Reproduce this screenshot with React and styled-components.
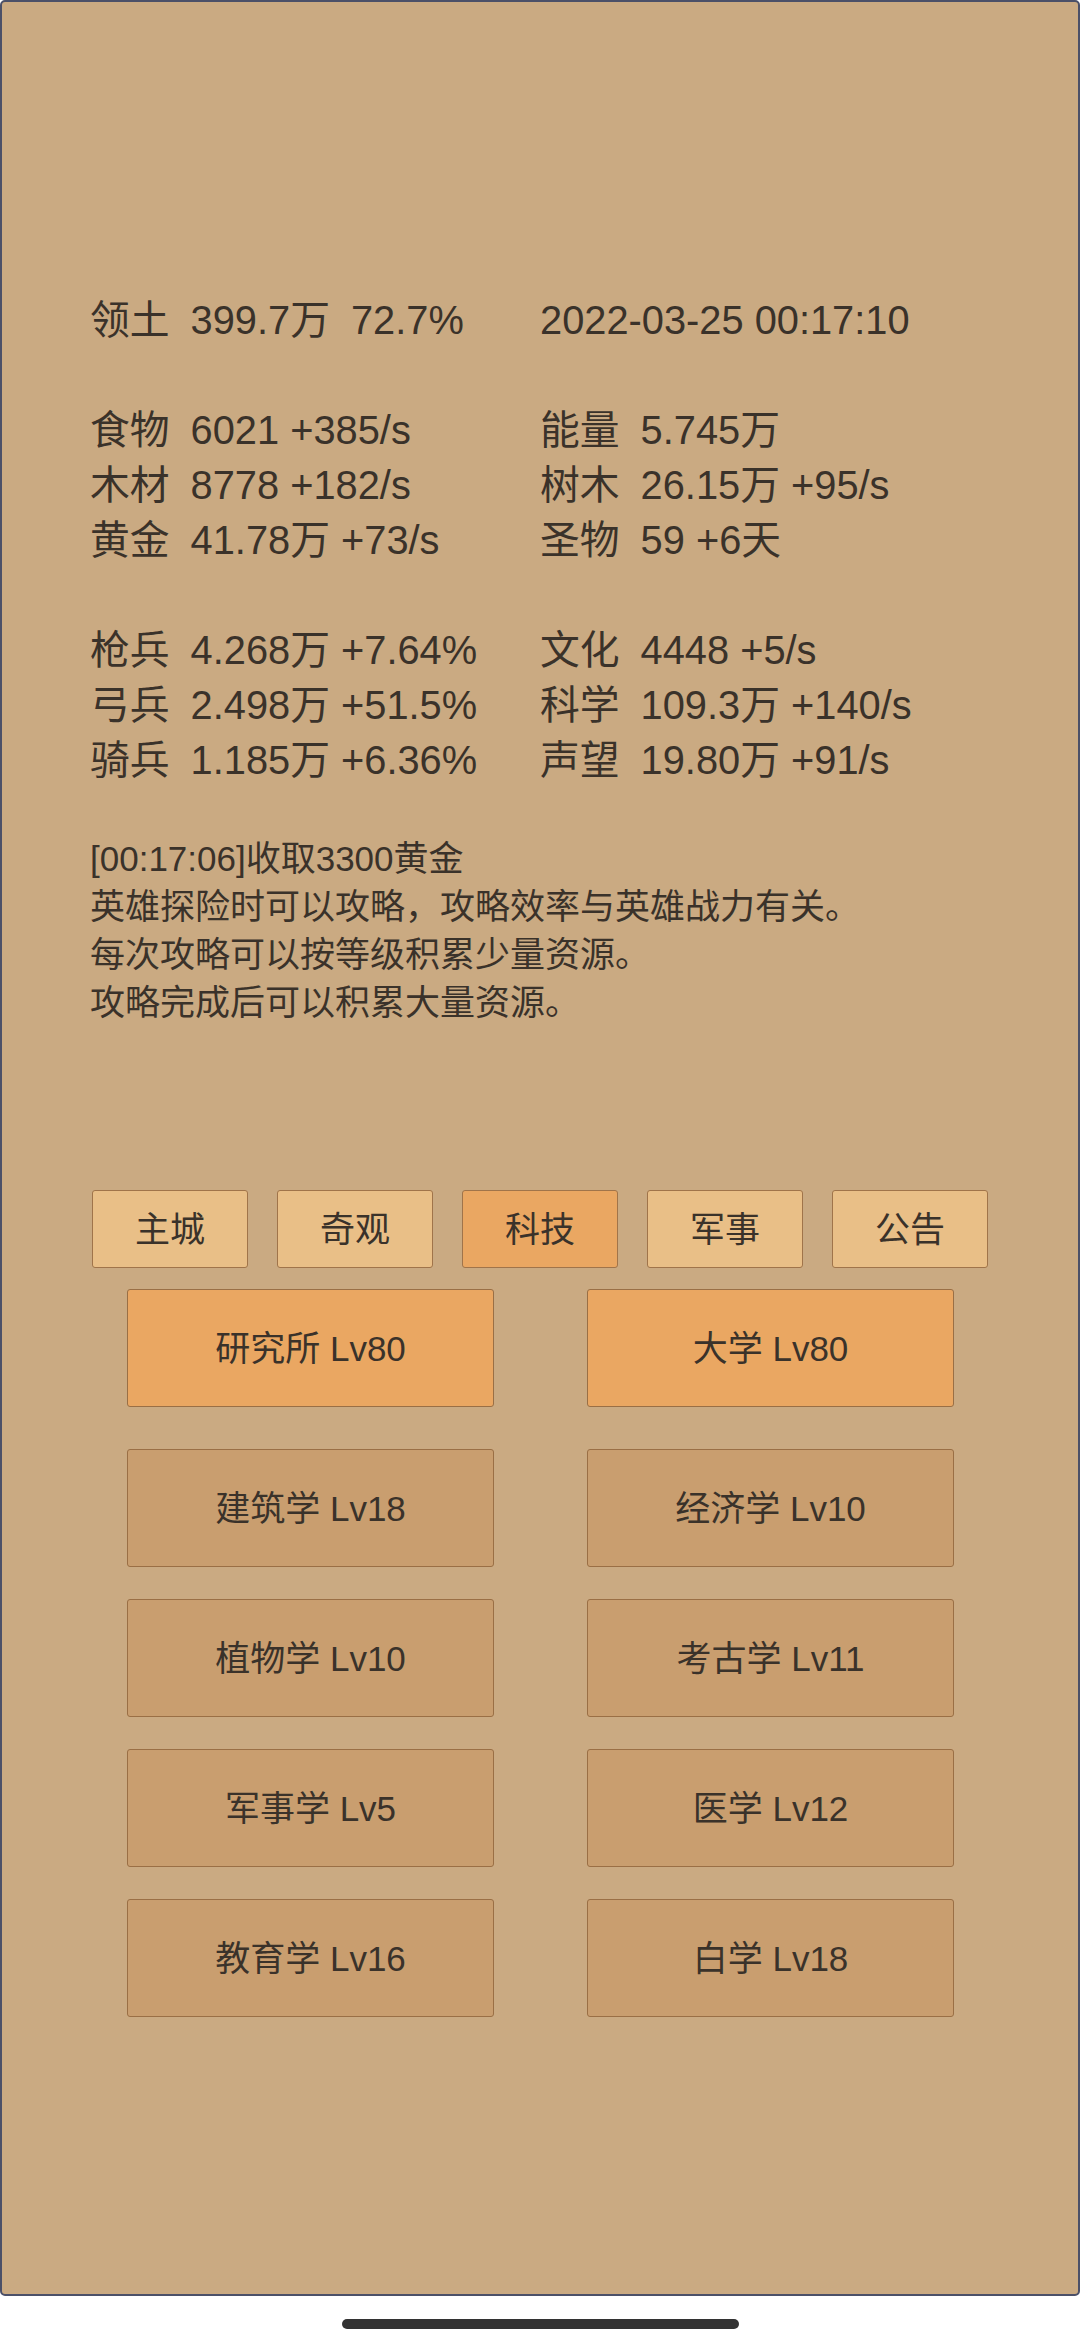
import React from "react";
import styled, { createGlobalStyle } from "styled-components";

const GlobalStyle = createGlobalStyle`
  html, body {
    margin: 0;
    padding: 0;
    background: #fff;
  }
  body {
    font-family: "Liberation Sans", "Noto Sans CJK SC", sans-serif;
    color: #3a322a;
  }
`;

const Screen = styled.div`
  width: 1080px;
  height: 2340px;
  display: flex;
  flex-direction: column;
`;

const Frame = styled.main`
  box-sizing: border-box;
  height: 2296px;
  background: #caaa82;
  border: 2px solid #4b5068;
  border-radius: 5px;
  padding: 291px 0 0 88px;
`;

const StatGrid = styled.div`
  display: grid;
  grid-template-columns: 450px 450px;
  font-size: 39.8px;
  line-height: 55px;
`;

const Group = styled.div`
  grid-column: 1 / -1;
  display: grid;
  grid-template-columns: 450px 450px;
  margin-top: ${props => (props.first ? 0 : "55px")};
`;

const Stat = styled.div`
  display: flex;
  gap: 21px;
  white-space: nowrap;
`;

const Label = styled.span`
  flex: none;
`;

const Log = styled.div`
  margin-top: 47px;
  font-size: 35px;
  line-height: 48px;
`;

const Tabs = styled.nav`
  display: flex;
  gap: 29px;
  margin: 163px 0 0 2px;
`;

const Tab = styled.div`
  box-sizing: border-box;
  width: 156px;
  height: 78px;
  padding-bottom: 5px;
  display: flex;
  align-items: center;
  justify-content: center;
  font-size: 35px;
  background: ${props => (props.active ? "#eaa762" : "#e9bf87")};
  border: 1.5px solid #a0744a;
  border-radius: 3px;
`;

const Buildings = styled.div`
  display: grid;
  grid-template-columns: 367px 367px;
  column-gap: 93px;
  row-gap: 32px;
  margin: 21px 0 0 37px;
`;

const Building = styled.div`
  box-sizing: border-box;
  height: 118px;
  padding-bottom: 5px;
  display: flex;
  align-items: center;
  justify-content: center;
  font-size: 35px;
  background: ${props => (props.top ? "#eaa762" : "#c99e6f")};
  border: 1.5px solid #9a6f45;
  border-radius: 3px;
  margin-bottom: ${props => (props.top ? "10px" : 0)};
`;

const HomeBar = styled.div`
  flex: 1;
  display: flex;
  justify-content: center;
  padding-top: 23px;
  &::after {
    content: "";
    width: 397px;
    height: 10px;
    border-radius: 5px;
    background: #333;
  }
`;

const groups = [
  [
    ["领土", "399.7万", "72.7%"],
    [null, "2022-03-25 00:17:10"]
  ],
  [
    ["食物", "6021 +385/s"],
    ["能量", "5.745万"],
    ["木材", "8778 +182/s"],
    ["树木", "26.15万 +95/s"],
    ["黄金", "41.78万 +73/s"],
    ["圣物", "59 +6天"]
  ],
  [
    ["枪兵", "4.268万 +7.64%"],
    ["文化", "4448 +5/s"],
    ["弓兵", "2.498万 +51.5%"],
    ["科学", "109.3万 +140/s"],
    ["骑兵", "1.185万 +6.36%"],
    ["声望", "19.80万 +91/s"]
  ]
];

const logs = [
  "[00:17:06]收取3300黄金",
  "英雄探险时可以攻略，攻略效率与英雄战力有关。",
  "每次攻略可以按等级积累少量资源。",
  "攻略完成后可以积累大量资源。"
];

const tabs = ["主城", "奇观", "科技", "军事", "公告"];

const buildings = [
  "研究所 Lv80",
  "大学 Lv80",
  "建筑学 Lv18",
  "经济学 Lv10",
  "植物学 Lv10",
  "考古学 Lv11",
  "军事学 Lv5",
  "医学 Lv12",
  "教育学 Lv16",
  "白学 Lv18"
];

export default function App() {
  return (
    <Screen>
      <GlobalStyle />
      <Frame>
        <StatGrid>
          {groups.map((g, i) => (
            <Group key={i} first={i === 0}>
              {g.map(([label, ...vals], j) => (
                <Stat key={j}>
                  {label && <Label>{label}</Label>}
                  {vals.map(v => (
                    <span key={v}>{v}</span>
                  ))}
                </Stat>
              ))}
            </Group>
          ))}
        </StatGrid>
        <Log>
          {logs.map(l => (
            <div key={l}>{l}</div>
          ))}
        </Log>
        <Tabs>
          {tabs.map(t => (
            <Tab key={t} active={t === "科技"}>
              {t}
            </Tab>
          ))}
        </Tabs>
        <Buildings>
          {buildings.map((b, i) => (
            <Building key={b} top={i < 2}>
              {b}
            </Building>
          ))}
        </Buildings>
      </Frame>
      <HomeBar />
    </Screen>
  );
}
